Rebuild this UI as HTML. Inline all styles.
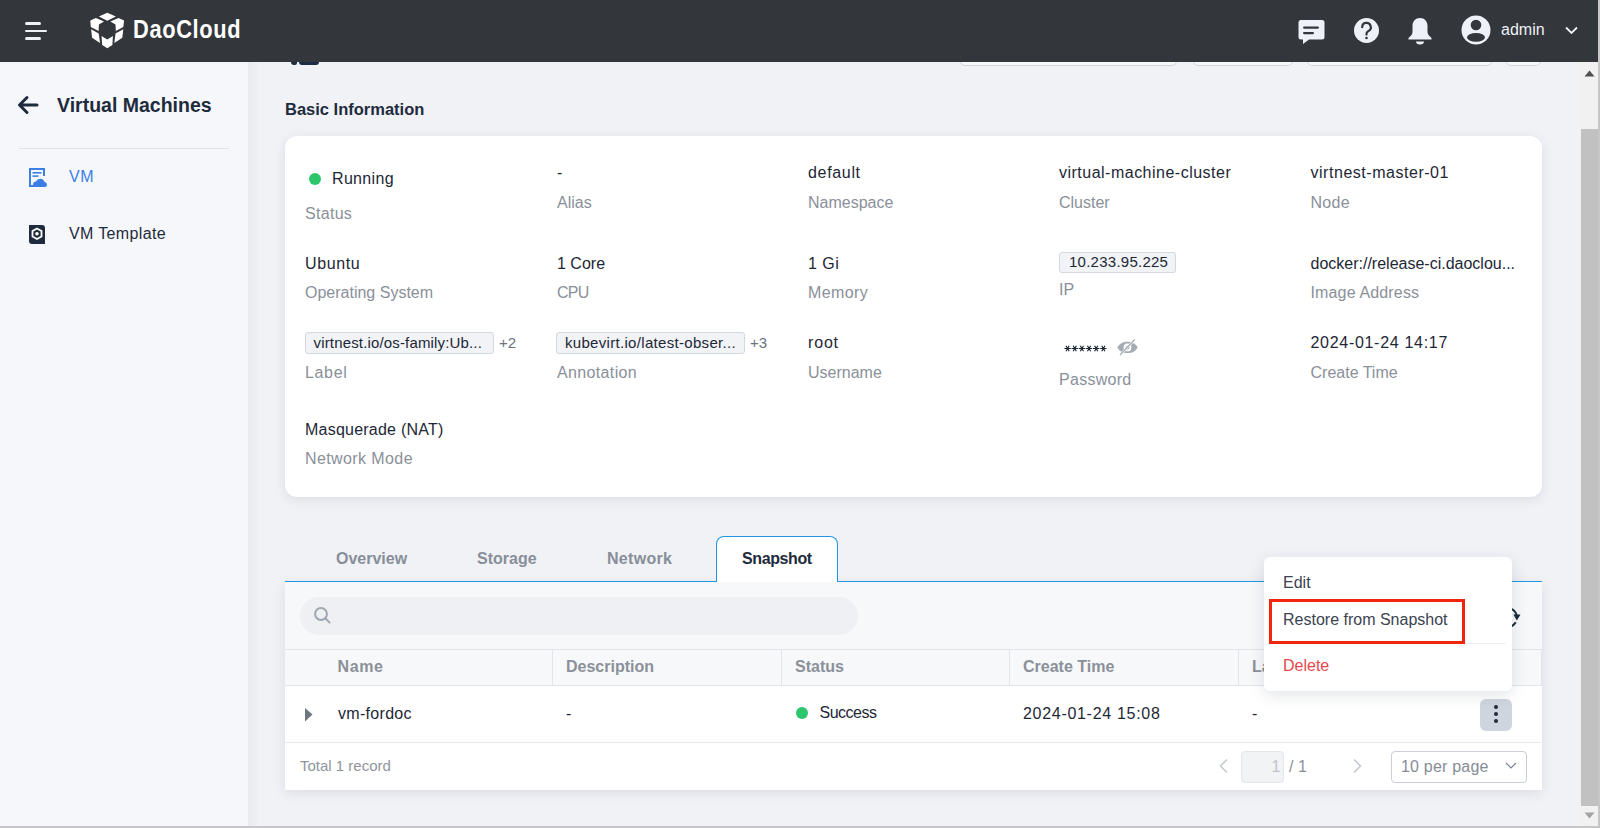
<!DOCTYPE html>
<html><head><meta charset="utf-8"><title>DaoCloud - Virtual Machines</title>
<style>
html,body{margin:0;padding:0;width:1600px;height:828px;overflow:hidden;background:#f1f2f6;font-family:"Liberation Sans", sans-serif;}
.t{position:absolute;white-space:nowrap;}
</style></head><body>
<div style="position:absolute;left:291px;top:56px;width:6px;height:8.5px;background:#1b2d45;border-radius:0 0 2px 3px"></div>
<div style="position:absolute;left:299px;top:56px;width:20px;height:8.5px;background:#1b2d45;border-radius:0 0 3px 3px"></div>
<div style="position:absolute;left:960px;top:40px;width:217px;height:25.5px;border:1px solid #cfd4dc;border-radius:5px;background:#f7f8fa;box-sizing:border-box"></div>
<div style="position:absolute;left:1193px;top:40px;width:100px;height:25.5px;border:1px solid #cfd4dc;border-radius:5px;background:#f7f8fa;box-sizing:border-box"></div>
<div style="position:absolute;left:1307px;top:40px;width:185px;height:25.5px;border:1px solid #cfd4dc;border-radius:5px;background:#f7f8fa;box-sizing:border-box"></div>
<div style="position:absolute;left:1506px;top:40px;width:35px;height:25.5px;border:1px solid #cfd4dc;border-radius:5px;background:#f7f8fa;box-sizing:border-box"></div>
<div style="position:absolute;left:0px;top:0px;width:1598px;height:62px;background:#33363b"></div>
<div style="position:absolute;left:25px;top:22px;width:16px;height:3px;background:#eef1f7;border-radius:1.5px"></div>
<div style="position:absolute;left:25px;top:30px;width:22px;height:2px;background:#eef1f7;border-radius:1px"></div>
<div style="position:absolute;left:25px;top:37px;width:16px;height:3px;background:#eef1f7;border-radius:1.5px"></div>
<svg style="position:absolute;left:86px;top:9px" width="44" height="42" viewBox="0 0 44 42">
<g fill="#fff">
<polygon points="12.9,7.6 21.3,3.8 29.9,7.6 21.3,11.7"/>
<polygon points="4.3,11.4 9.9,8.9 18,12.4 12.9,15.4 12.6,22 4.8,18"/>
<polygon points="38.1,11.4 32.5,8.9 24.4,12.4 29.5,15.4 29.8,22 37.3,18"/>
<polygon points="5.1,20.3 12.7,24.4 14,34 6.1,28.7"/>
<polygon points="37.3,20.3 29.5,24.4 28.3,34 36.3,28.7"/>
<polygon points="15.5,26.9 21.3,30.5 26.9,26.9 26.4,36 21.3,39.3 16.2,36"/>
</g></svg>
<div class="t" style="left:132.5px;top:14.00px;font-size:26px;line-height:30px;font-weight:700;color:#ffffff;transform:scaleX(0.84);transform-origin:0 0;letter-spacing:0.75px">DaoCloud</div>
<svg style="position:absolute;left:1297px;top:18px" width="30" height="28" viewBox="0 0 30 28">
<path d="M4,2 H25 a2.5,2.5 0 0 1 2.5,2.5 V19 a2.5,2.5 0 0 1 -2.5,2.5 H12 L6,26 V21.5 H4 a2.5,2.5 0 0 1 -2.5,-2.5 V4.5 A2.5,2.5 0 0 1 4,2 Z" fill="#eef1f7"/>
<rect x="6" y="8.5" width="16" height="2.2" rx="1.1" fill="#33363b"/>
<rect x="6" y="14" width="11" height="2.2" rx="1.1" fill="#33363b"/>
</svg>
<svg style="position:absolute;left:1353px;top:17px" width="27" height="27" viewBox="0 0 27 27">
<circle cx="13.5" cy="13.5" r="12.5" fill="#eef1f7"/>
<path d="M9.2,10.2 a4.3,4.3 0 1 1 6.3,3.8 c-1.3,0.7 -2,1.4 -2,2.8 v0.8" fill="none" stroke="#33363b" stroke-width="2.2" stroke-linecap="round"/>
<circle cx="13.5" cy="21" r="1.3" fill="#33363b"/>
</svg>
<svg style="position:absolute;left:1406px;top:16px" width="28" height="30" viewBox="0 0 28 30">
<path d="M14,2 c4.5,0 7.5,3.5 7.5,8 v5.5 c0,2.5 1,4 4,6.5 v1.5 H2.5 V22 c3,-2.5 4,-4 4,-6.5 V10 C6.5,5.5 9.5,2 14,2 Z" fill="#eef1f7"/>
<path d="M10,25.5 h8 a4,3 0 0 1 -8,0 Z" fill="#eef1f7"/>
</svg>
<svg style="position:absolute;left:1461px;top:15px" width="30" height="30" viewBox="0 0 30 30">
<circle cx="15" cy="15" r="14.5" fill="#eef1f7"/>
<circle cx="15" cy="10" r="5.3" fill="#33363b"/>
<ellipse cx="15" cy="22.3" rx="9" ry="4.4" fill="#33363b"/>
</svg>
<div class="t" style="left:1501px;top:20.00px;font-size:16px;line-height:20px;font-weight:400;color:#eef1f7;">admin</div>
<svg style="position:absolute;left:1564px;top:25px" width="15" height="11" viewBox="0 0 15 11">
<path d="M2,2.5 L7.5,8 L13,2.5" fill="none" stroke="#eef1f7" stroke-width="1.8"/>
</svg>
<div style="position:absolute;left:0px;top:62px;width:248px;height:766px;background:#f6f7fb"></div>
<svg style="position:absolute;left:16px;top:94px" width="25" height="22" viewBox="0 0 25 22">
<path d="M21,11 H4 M11,3.5 L3.5,11 L11,18.5" fill="none" stroke="#1e2b3c" stroke-width="3" stroke-linecap="round" stroke-linejoin="round"/>
</svg>
<div class="t" style="left:57px;top:90.00px;font-size:19.5px;line-height:30px;font-weight:700;color:#1e2b3c;">Virtual Machines</div>
<div style="position:absolute;left:19px;top:148px;width:210px;height:1px;background:#dfe2e9"></div>
<svg style="position:absolute;left:28px;top:167px" width="20" height="21" viewBox="0 0 20 21">
<path d="M8,19 H2 V2 H16 V9" fill="none" stroke="#3b7fe6" stroke-width="2"/>
<rect x="4.5" y="5" width="9" height="1.6" fill="#3b7fe6"/>
<rect x="4.5" y="8.3" width="6" height="1.6" fill="#3b7fe6"/>
<path d="M6.5,20 a3,3 0 0 1 1.5,-5.6 a4.5,4.5 0 0 1 8.5,0.6 a2.6,2.6 0 0 1 2.5,2.5 a2.5,2.5 0 0 1 -2.5,2.5 Z" fill="#3b7fe6"/>
</svg>
<div class="t" style="left:69px;top:167.00px;font-size:16px;line-height:20px;font-weight:400;color:#3b7fe6;letter-spacing:0.5px;">VM</div>
<svg style="position:absolute;left:28px;top:224px" width="18" height="21" viewBox="0 0 18 21">
<path d="M1,1 H14 a3,3 0 0 1 3,3 V20 H4 a3,3 0 0 1 -3,-3 Z" fill="#1e2b3c"/>
<polygon points="9,4.5 13.5,7 13.5,12.5 9,15 4.5,12.5 4.5,7" fill="none" stroke="#fff" stroke-width="1.8"/>
<circle cx="9" cy="9.75" r="1.8" fill="#fff"/>
</svg>
<div class="t" style="left:69px;top:224.00px;font-size:16px;line-height:20px;font-weight:400;color:#1e2b3c;letter-spacing:0.35px;">VM Template</div>
<div style="position:absolute;left:248px;top:62px;width:12px;height:764px;background:linear-gradient(to right, rgba(0,0,0,0.03), rgba(0,0,0,0))"></div>
<div class="t" style="left:285px;top:98.50px;font-size:16.5px;line-height:20px;font-weight:700;color:#1e2b3c;">Basic Information</div>
<div style="position:absolute;left:285px;top:136px;width:1257px;height:361px;background:#fff;border-radius:12px;box-shadow:0 3px 12px rgba(30,40,60,0.10)"></div>
<div style="position:absolute;left:309px;top:173px;width:12px;height:12px;background:#2ec66d;border-radius:50%"></div>
<div class="t" style="left:332px;top:169.00px;font-size:16px;line-height:20px;font-weight:400;color:#1d2736;letter-spacing:0.33px;">Running</div>
<div class="t" style="left:305px;top:204.00px;font-size:16px;line-height:20px;font-weight:400;color:#8a9099;letter-spacing:0.3px;">Status</div>
<div class="t" style="left:557px;top:163.00px;font-size:16px;line-height:20px;font-weight:400;color:#1d2736;">-</div>
<div class="t" style="left:557px;top:192.50px;font-size:16px;line-height:20px;font-weight:400;color:#8a9099;">Alias</div>
<div class="t" style="left:808px;top:163.00px;font-size:16px;line-height:20px;font-weight:400;color:#1d2736;letter-spacing:0.67px;">default</div>
<div class="t" style="left:808px;top:192.50px;font-size:16px;line-height:20px;font-weight:400;color:#8a9099;">Namespace</div>
<div class="t" style="left:1059px;top:163.00px;font-size:16px;line-height:20px;font-weight:400;color:#1d2736;letter-spacing:0.49px;">virtual-machine-cluster</div>
<div class="t" style="left:1059px;top:192.50px;font-size:16px;line-height:20px;font-weight:400;color:#8a9099;">Cluster</div>
<div class="t" style="left:1310.5px;top:163.00px;font-size:16px;line-height:20px;font-weight:400;color:#1d2736;letter-spacing:0.53px;">virtnest-master-01</div>
<div class="t" style="left:1310.5px;top:192.50px;font-size:16px;line-height:20px;font-weight:400;color:#8a9099;letter-spacing:0.3px;">Node</div>
<div class="t" style="left:305px;top:254.00px;font-size:16px;line-height:20px;font-weight:400;color:#1d2736;letter-spacing:0.6px;">Ubuntu</div>
<div class="t" style="left:305px;top:282.50px;font-size:16px;line-height:20px;font-weight:400;color:#8a9099;">Operating System</div>
<div class="t" style="left:557px;top:254.00px;font-size:16px;line-height:20px;font-weight:400;color:#1d2736;">1 Core</div>
<div class="t" style="left:557px;top:282.50px;font-size:16px;line-height:20px;font-weight:400;color:#8a9099;letter-spacing:-0.8px;">CPU</div>
<div class="t" style="left:808px;top:254.00px;font-size:16px;line-height:20px;font-weight:400;color:#1d2736;letter-spacing:0.5px;">1 Gi</div>
<div class="t" style="left:808px;top:282.50px;font-size:16px;line-height:20px;font-weight:400;color:#8a9099;letter-spacing:0.4px;">Memory</div>
<div style="position:absolute;left:1059px;top:252px;width:117px;height:21px;background:#f1f3f6;border:1px solid #d3d8df;border-radius:3px;box-sizing:border-box"></div>
<div class="t" style="left:1069px;top:252.00px;font-size:15px;line-height:20px;font-weight:400;color:#1d2736;letter-spacing:0.25px;">10.233.95.225</div>
<div class="t" style="left:1059px;top:280.00px;font-size:16px;line-height:20px;font-weight:400;color:#8a9099;">IP</div>
<div class="t" style="left:1310.5px;top:254.00px;font-size:16px;line-height:20px;font-weight:400;color:#1d2736;">docker://release-ci.daoclou...</div>
<div class="t" style="left:1310.5px;top:282.50px;font-size:16px;line-height:20px;font-weight:400;color:#8a9099;letter-spacing:0.15px;">Image Address</div>
<div style="position:absolute;left:305px;top:332px;width:189px;height:22px;background:#f1f3f6;border:1px solid #d3d8df;border-radius:3px;box-sizing:border-box"></div>
<div class="t" style="left:313.5px;top:332.50px;font-size:15px;line-height:20px;font-weight:400;color:#1d2736;letter-spacing:0.16px;">virtnest.io/os-family:Ub...</div>
<div class="t" style="left:499px;top:333.00px;font-size:15px;line-height:20px;font-weight:400;color:#6b7280;">+2</div>
<div class="t" style="left:305px;top:363.00px;font-size:16px;line-height:20px;font-weight:400;color:#8a9099;letter-spacing:0.65px;">Label</div>
<div style="position:absolute;left:556px;top:332px;width:189px;height:22px;background:#f1f3f6;border:1px solid #d3d8df;border-radius:3px;box-sizing:border-box"></div>
<div class="t" style="left:565px;top:332.50px;font-size:15px;line-height:20px;font-weight:400;color:#1d2736;letter-spacing:0.31px;">kubevirt.io/latest-obser...</div>
<div class="t" style="left:750px;top:333.00px;font-size:15px;line-height:20px;font-weight:400;color:#6b7280;">+3</div>
<div class="t" style="left:557px;top:363.00px;font-size:16px;line-height:20px;font-weight:400;color:#8a9099;letter-spacing:0.36px;">Annotation</div>
<div class="t" style="left:808px;top:333.00px;font-size:16px;line-height:20px;font-weight:400;color:#1d2736;letter-spacing:0.83px;">root</div>
<div class="t" style="left:808px;top:362.50px;font-size:16px;line-height:20px;font-weight:400;color:#8a9099;">Username</div>
<svg style="position:absolute;left:1064px;top:344px" width="44" height="8" viewBox="0 0 44 8"><g transform="translate(3.60,4.5)"><path d="M-3.2,0 H3.2 M-1.6,-2.8 L1.6,2.8 M1.6,-2.8 L-1.6,2.8" stroke="#1d2736" stroke-width="1.15"/></g><g transform="translate(10.75,4.5)"><path d="M-3.2,0 H3.2 M-1.6,-2.8 L1.6,2.8 M1.6,-2.8 L-1.6,2.8" stroke="#1d2736" stroke-width="1.15"/></g><g transform="translate(17.90,4.5)"><path d="M-3.2,0 H3.2 M-1.6,-2.8 L1.6,2.8 M1.6,-2.8 L-1.6,2.8" stroke="#1d2736" stroke-width="1.15"/></g><g transform="translate(25.05,4.5)"><path d="M-3.2,0 H3.2 M-1.6,-2.8 L1.6,2.8 M1.6,-2.8 L-1.6,2.8" stroke="#1d2736" stroke-width="1.15"/></g><g transform="translate(32.20,4.5)"><path d="M-3.2,0 H3.2 M-1.6,-2.8 L1.6,2.8 M1.6,-2.8 L-1.6,2.8" stroke="#1d2736" stroke-width="1.15"/></g><g transform="translate(39.35,4.5)"><path d="M-3.2,0 H3.2 M-1.6,-2.8 L1.6,2.8 M1.6,-2.8 L-1.6,2.8" stroke="#1d2736" stroke-width="1.15"/></g></svg>
<svg style="position:absolute;left:1116px;top:338px" width="23" height="18" viewBox="0 0 23 18">
<path d="M1.5,9.4 C4.5,1.8 18.5,1.8 21.5,9.4 C18.5,17 4.5,17 1.5,9.4 Z" fill="#a5acb6"/>
<circle cx="11.5" cy="9.4" r="3.9" fill="#fff"/>
<circle cx="11.5" cy="9.4" r="2" fill="#a5acb6"/>
<path d="M4,17 L18.8,1.5" stroke="#fff" stroke-width="2.4"/>
<path d="M4,17 L18.8,1.5" stroke="#a5acb6" stroke-width="1.2"/>
</svg>
<div class="t" style="left:1059px;top:370.00px;font-size:16px;line-height:20px;font-weight:400;color:#8a9099;letter-spacing:0.28px;">Password</div>
<div class="t" style="left:1310.5px;top:333.00px;font-size:16px;line-height:20px;font-weight:400;color:#1d2736;letter-spacing:0.7px;">2024-01-24 14:17</div>
<div class="t" style="left:1310.5px;top:362.50px;font-size:16px;line-height:20px;font-weight:400;color:#8a9099;">Create Time</div>
<div class="t" style="left:305px;top:419.50px;font-size:16px;line-height:20px;font-weight:400;color:#1d2736;letter-spacing:0.23px;">Masquerade (NAT)</div>
<div class="t" style="left:305px;top:449.00px;font-size:16px;line-height:20px;font-weight:400;color:#8a9099;letter-spacing:0.4px;">Network Mode</div>
<div class="t" style="left:336px;top:549.00px;font-size:16px;line-height:20px;font-weight:700;color:#878e99;">Overview</div>
<div class="t" style="left:477px;top:549.00px;font-size:16px;line-height:20px;font-weight:700;color:#878e99;">Storage</div>
<div class="t" style="left:607px;top:549.00px;font-size:16px;line-height:20px;font-weight:700;color:#878e99;letter-spacing:0.3px;">Network</div>
<div style="position:absolute;left:285px;top:582px;width:1257px;height:208px;background:#fff;box-shadow:0 3px 12px rgba(30,40,60,0.10)"></div>
<div style="position:absolute;left:285px;top:581px;width:1257px;height:1px;background:#1f97e3"></div>
<div style="position:absolute;left:716px;top:536px;width:122px;height:47px;background:#fff;border:1px solid #1f97e3;border-bottom:none;border-radius:8px 8px 0 0;box-sizing:border-box"></div>
<div class="t" style="left:742px;top:549.00px;font-size:16px;line-height:20px;font-weight:700;color:#1e2b3c;letter-spacing:-0.4px;">Snapshot</div>
<div style="position:absolute;left:285px;top:582px;width:1257px;height:67px;background:#f7f8fa"></div>
<div style="position:absolute;left:300px;top:597px;width:558px;height:38px;background:#eef0f4;border-radius:19px"></div>
<svg style="position:absolute;left:312px;top:605px" width="22" height="22" viewBox="0 0 22 22">
<circle cx="9" cy="9" r="5.9" fill="none" stroke="#a0a7b1" stroke-width="2"/>
<path d="M13.3,13.3 L17.6,17.6" stroke="#a0a7b1" stroke-width="2" stroke-linecap="round"/>
</svg>
<svg style="position:absolute;left:1490px;top:601px" width="32" height="32" viewBox="0 0 32 32">
<path d="M17.5,7 A9.5,9.5 0 0 1 26.9,14.85" fill="none" stroke="#1e2b3c" stroke-width="2"/>
<polygon points="23.3,13.6 30.5,13.6 26.9,19.6" fill="#1e2b3c"/>
<path d="M25.7,21.25 A9.5,9.5 0 0 1 17.5,26" fill="none" stroke="#1e2b3c" stroke-width="2"/>
</svg>
<div style="position:absolute;left:285px;top:649px;width:1257px;height:37px;background:#f7f8fa;border-top:1px solid #e1e4ea;border-bottom:1px solid #e1e4ea;box-sizing:border-box"></div>
<div style="position:absolute;left:552px;top:650px;width:1px;height:35px;background:#e1e4ea"></div>
<div style="position:absolute;left:781px;top:650px;width:1px;height:35px;background:#e1e4ea"></div>
<div style="position:absolute;left:1009px;top:650px;width:1px;height:35px;background:#e1e4ea"></div>
<div style="position:absolute;left:1238px;top:650px;width:1px;height:35px;background:#e1e4ea"></div>
<div style="position:absolute;left:1541px;top:650px;width:1px;height:35px;background:#e1e4ea"></div>
<div class="t" style="left:337.5px;top:657.00px;font-size:16px;line-height:20px;font-weight:700;color:#8a9099;letter-spacing:0.6px;">Name</div>
<div class="t" style="left:566px;top:657.00px;font-size:16px;line-height:20px;font-weight:700;color:#8a9099;">Description</div>
<div class="t" style="left:795px;top:657.00px;font-size:16px;line-height:20px;font-weight:700;color:#8a9099;">Status</div>
<div class="t" style="left:1023px;top:657.00px;font-size:16px;line-height:20px;font-weight:700;color:#8a9099;">Create Time</div>
<div class="t" style="left:1252px;top:657.00px;font-size:16px;line-height:20px;font-weight:700;color:#8a9099;">Last</div>
<svg style="position:absolute;left:304px;top:707px" width="10" height="16" viewBox="0 0 10 16">
<polygon points="1,1 8.5,7.5 1,14.5" fill="#6f7682"/>
</svg>
<div class="t" style="left:338px;top:704.00px;font-size:16px;line-height:20px;font-weight:400;color:#1d2736;letter-spacing:0.3px;">vm-fordoc</div>
<div class="t" style="left:566px;top:704.00px;font-size:16px;line-height:20px;font-weight:400;color:#1d2736;">-</div>
<div style="position:absolute;left:795.5px;top:707px;width:12px;height:12px;background:#2ec66d;border-radius:50%"></div>
<div class="t" style="left:819.5px;top:703.00px;font-size:16px;line-height:20px;font-weight:400;color:#1d2736;letter-spacing:-0.5px;">Success</div>
<div class="t" style="left:1023px;top:704.00px;font-size:16px;line-height:20px;font-weight:400;color:#1d2736;letter-spacing:0.7px;">2024-01-24 15:08</div>
<div class="t" style="left:1252px;top:704.00px;font-size:16px;line-height:20px;font-weight:400;color:#1d2736;">-</div>
<div style="position:absolute;left:1480px;top:699px;width:32px;height:32px;background:#cfd5df;border-radius:6px"></div>
<div style="position:absolute;left:1493.7px;top:705.2px;width:4px;height:4px;background:#1e2b3c;border-radius:50%"></div>
<div style="position:absolute;left:1493.7px;top:712.1px;width:4px;height:4px;background:#1e2b3c;border-radius:50%"></div>
<div style="position:absolute;left:1493.7px;top:719.3px;width:4px;height:4px;background:#1e2b3c;border-radius:50%"></div>
<div style="position:absolute;left:285px;top:742px;width:1257px;height:1px;background:#e6e9ee"></div>
<div class="t" style="left:300px;top:756.00px;font-size:15px;line-height:20px;font-weight:400;color:#8f959e;">Total 1 record</div>
<svg style="position:absolute;left:1216px;top:757px" width="14" height="18" viewBox="0 0 14 18">
<path d="M11,2.5 L4.5,9 L11,15.5" fill="none" stroke="#c5c9d0" stroke-width="1.6"/>
</svg>
<div style="position:absolute;left:1241px;top:751px;width:43px;height:32px;background:#f2f3f5;border:1px solid #e3e6eb;border-radius:4px;box-sizing:border-box"></div>
<div class="t" style="left:1271.5px;top:757.00px;font-size:16px;line-height:20px;font-weight:400;color:#bfc3ca;">1</div>
<div class="t" style="left:1289px;top:757.00px;font-size:16px;line-height:20px;font-weight:400;color:#8a9099;">/ 1</div>
<svg style="position:absolute;left:1351px;top:757px" width="14" height="18" viewBox="0 0 14 18">
<path d="M3,2.5 L9.5,9 L3,15.5" fill="none" stroke="#c5c9d0" stroke-width="1.6"/>
</svg>
<div style="position:absolute;left:1391px;top:751px;width:136px;height:32px;background:#fff;border:1px solid #c9ced7;border-radius:4px;box-sizing:border-box"></div>
<div class="t" style="left:1401px;top:757.00px;font-size:16px;line-height:20px;font-weight:400;color:#868c96;letter-spacing:0.2px;">10 per page</div>
<svg style="position:absolute;left:1504px;top:760px" width="14" height="12" viewBox="0 0 14 12">
<path d="M2,3 L7,8 L12,3" fill="none" stroke="#7d8696" stroke-width="1.2"/>
</svg>
<div style="position:absolute;left:1264px;top:557px;width:248px;height:134px;background:#fff;border-radius:6px;box-shadow:0 4px 16px rgba(20,30,50,0.12)"></div>
<div class="t" style="left:1283px;top:573.00px;font-size:16px;line-height:20px;font-weight:400;color:#3b4350;">Edit</div>
<div style="position:absolute;left:1269px;top:599px;width:196px;height:45px;border:3px solid #f2260e;box-sizing:border-box"></div>
<div class="t" style="left:1283px;top:610.00px;font-size:16px;line-height:20px;font-weight:400;color:#3b4350;">Restore from Snapshot</div>
<div style="position:absolute;left:1465px;top:642.5px;width:41px;height:1px;background:#eceef2"></div>
<div class="t" style="left:1283px;top:656.00px;font-size:16px;line-height:20px;font-weight:400;color:#e5484d;">Delete</div>
<div style="position:absolute;left:1579px;top:62px;width:19px;height:764px;background:#f1f1f1"></div>
<div style="position:absolute;left:1581px;top:129px;width:17px;height:677px;background:#c1c1c1"></div>
<svg style="position:absolute;left:1584px;top:70px" width="11" height="7" viewBox="0 0 11 7"><polygon points="5.5,0.5 10.5,6.5 0.5,6.5" fill="#505050"/></svg>
<svg style="position:absolute;left:1584px;top:812px" width="11" height="7" viewBox="0 0 11 7"><polygon points="0.5,0.5 10.5,0.5 5.5,6.5" fill="#a3a3a3"/></svg>
<div style="position:absolute;left:1598px;top:0px;width:2px;height:828px;background:#c6c6c6"></div>
<div style="position:absolute;left:0px;top:826px;width:1600px;height:2px;background:#c6c6c6"></div>
</body></html>
